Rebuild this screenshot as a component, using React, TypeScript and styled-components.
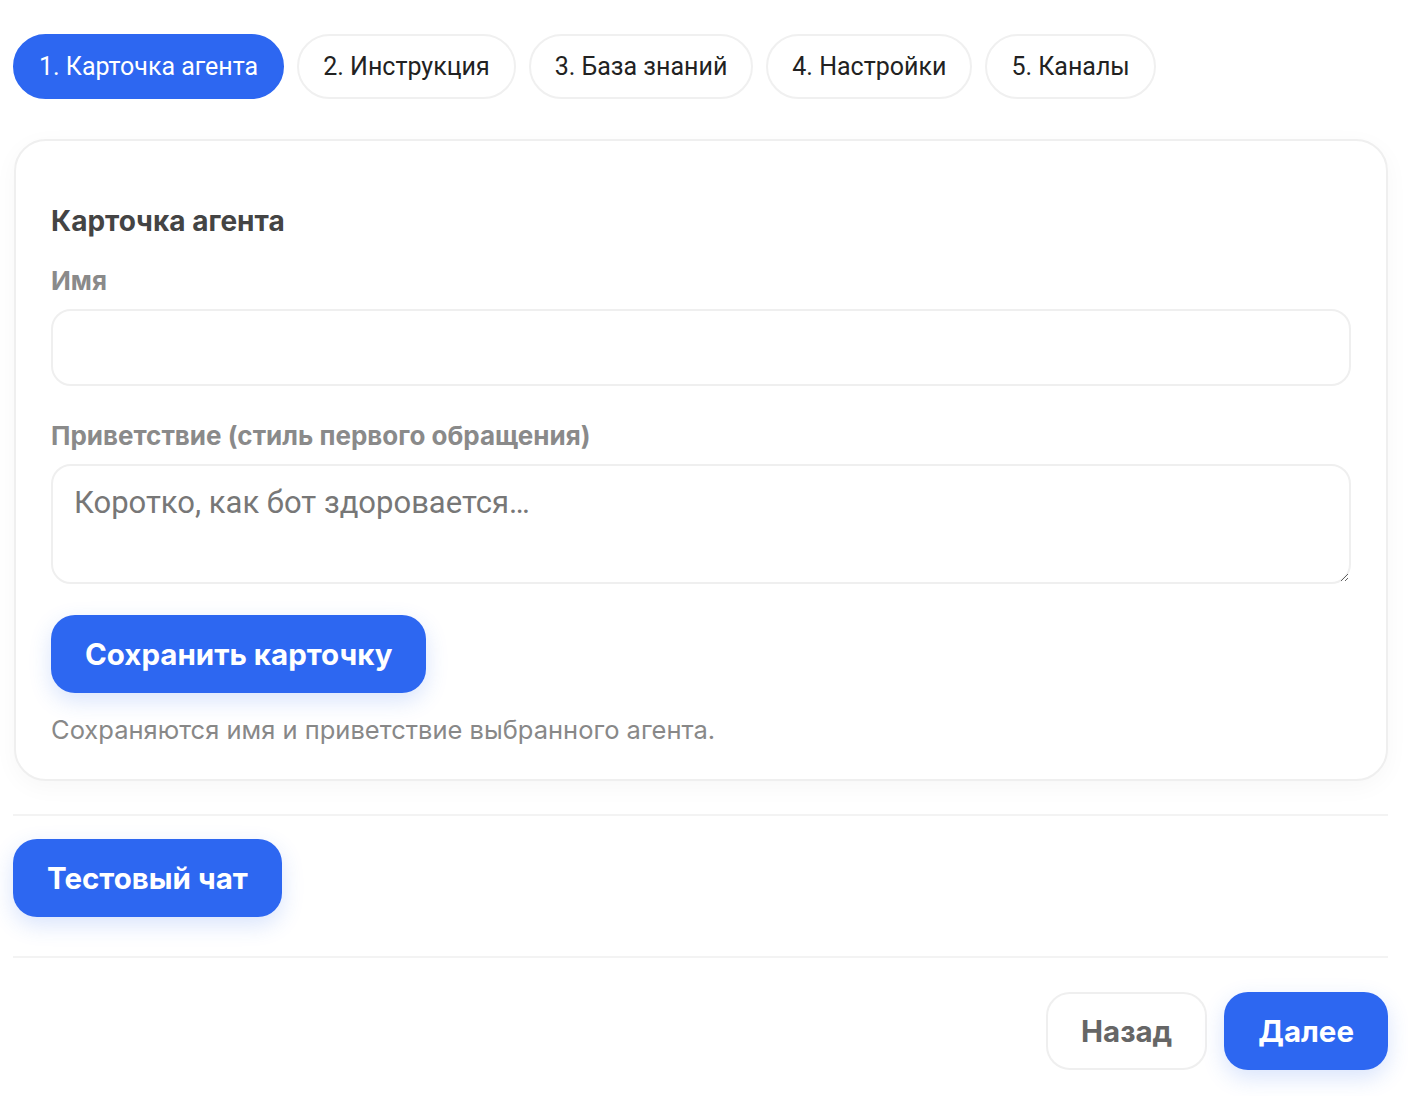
import React, { useState } from "react";
import styled, { createGlobalStyle } from "styled-components";

const GlobalStyle = createGlobalStyle`
  body {
    margin: 0;
    background: #fff;
    font-family: Inter, "Noto Sans", sans-serif;
    color: #333;
  }
`;

const Page = styled.div`
  padding: 34px 20px 26px 13px;
  display: flex;
  flex-direction: column;
`;

const Tabs = styled.div`
  display: flex;
  gap: 13px;
`;

const Tab = styled.button<{ $active?: boolean }>`
  height: 65px;
  padding: 0 24px;
  border-radius: 33px;
  font-family: Roboto, "Liberation Sans", sans-serif;
  font-size: 25px;
  font-weight: 400;
  cursor: pointer;
  border: 2px solid ${(p) => (p.$active ? "#2d67f1" : "#f0f0f0")};
  background: ${(p) => (p.$active ? "#2d67f1" : "#fff")};
  color: ${(p) => (p.$active ? "#fff" : "#222")};
`;

const Card = styled.section`
  margin-top: 40px;
  margin-left: 1px;
  border: 2px solid #efefef;
  border-radius: 32px;
  background: #fff;
  box-shadow: 0 6px 24px rgba(0, 0, 0, 0.035);
  padding: 63px 35px 34px 35px;
  display: flex;
  flex-direction: column;
`;

const CardTitle = styled.h2`
  margin: 0 0 27px;
  font-size: 28px;
  font-weight: 700;
  color: #444;
`;

const Label = styled.label`
  font-size: 26px;
  font-weight: 700;
  color: #8a8a8a;
  margin-bottom: 13px;
`;

const Input = styled.input`
  height: 77px;
  box-sizing: border-box;
  border: 2px solid #efefef;
  border-radius: 20px;
  padding: 0 22px;
  font-family: inherit;
  font-size: 30px;
  outline: none;
  margin-bottom: 34px;
`;

const TextArea = styled.textarea`
  height: 120px;
  box-sizing: border-box;
  border: 2px solid #efefef;
  border-radius: 20px;
  padding: 18px 22px 18px 21px;
  font-family: Roboto, "Liberation Sans", sans-serif;
  font-size: 31px;
  color: #444;
  outline: none;
  resize: vertical;
  margin-bottom: 31px;
  &::placeholder {
    color: #777;
  }
`;

const PrimaryButton = styled.button`
  align-self: flex-start;
  height: 78px;
  padding: 0 34px;
  border: none;
  border-radius: 24px;
  background: #2d67f1;
  color: #fff;
  font-family: Inter, "Noto Sans", sans-serif;
  font-size: 29.5px;
  font-weight: 700;
  cursor: pointer;
  box-shadow: 0 8px 22px rgba(45, 103, 241, 0.18);
`;

const GhostButton = styled(PrimaryButton)`
  background: #fff;
  color: #666;
  border: 2px solid #efefef;
  box-shadow: none;
  padding: 0 33px;
`;

const Hint = styled.p`
  margin: 21px 0 0;
  font-size: 25.5px;
  color: #888;
`;

const Divider = styled.hr`
  border: none;
  border-top: 2px solid #f3f3f3;
  margin: 0;
  width: 100%;
`;

const Gap = styled.div`
  height: 33px;
`;

const ChatRow = styled.div`
  padding: 23px 0 39px;
  display: flex;
`;

const Footer = styled.div`
  display: flex;
  justify-content: flex-end;
  gap: 17px;
  padding-top: 34px;
`;

const steps = [
  "1. Карточка агента",
  "2. Инструкция",
  "3. База знаний",
  "4. Настройки",
  "5. Каналы",
];

export default function App() {
  const [active, setActive] = useState(0);
  return (
    <>
      <GlobalStyle />
      <Page>
        <Tabs>
          {steps.map((s, i) => (
            <Tab key={s} $active={i === active} onClick={() => setActive(i)}>
              {s}
            </Tab>
          ))}
        </Tabs>

        <Card>
          <CardTitle>Карточка агента</CardTitle>
          <Label htmlFor="name">Имя</Label>
          <Input id="name" />
          <Label htmlFor="greet">Приветствие (стиль первого обращения)</Label>
          <TextArea id="greet" placeholder="Коротко, как бот здоровается…" />
          <PrimaryButton>Сохранить карточку</PrimaryButton>
          <Hint>Сохраняются имя и приветствие выбранного агента.</Hint>
        </Card>

        <Gap />
        <Divider />
        <ChatRow>
          <PrimaryButton>Тестовый чат</PrimaryButton>
        </ChatRow>
        <Divider />
        <Footer>
          <GhostButton>Назад</GhostButton>
          <PrimaryButton>Далее</PrimaryButton>
        </Footer>
      </Page>
    </>
  );
}
